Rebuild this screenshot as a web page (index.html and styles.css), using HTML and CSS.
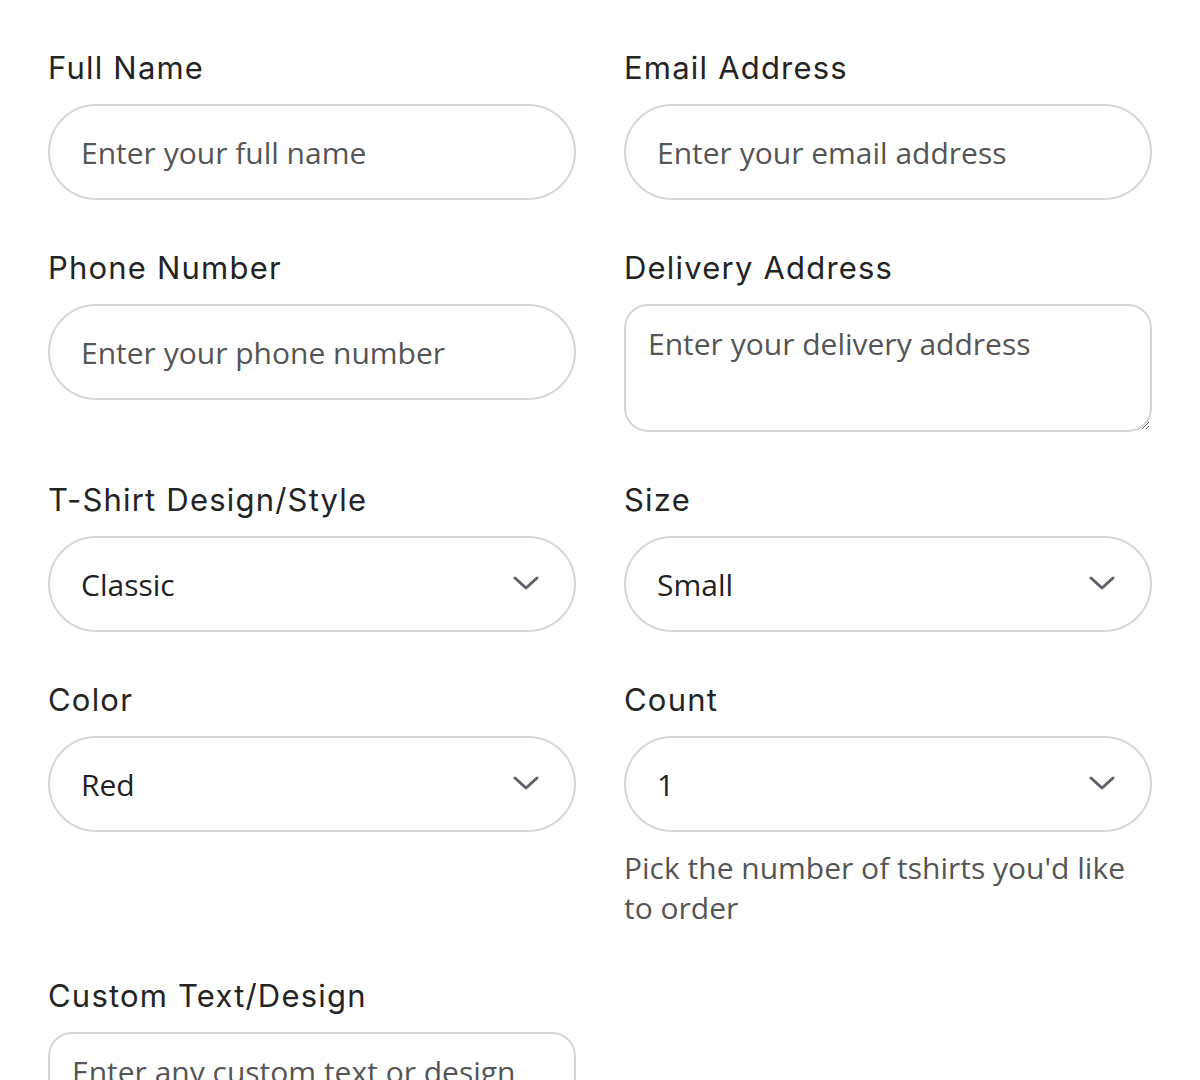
FILE: index.html
```html
<!DOCTYPE html>
<html lang="en">
<head>
    <meta charset="UTF-8">
    <meta name="viewport" content="width=device-width, initial-scale=1.0">
    <title>T-Shirt Order</title>
    <link rel="stylesheet" href="styles.css">
</head>
<body>

    <form class="order-form" action="#" method="post">

        <div class="field">
            <label for="fullName">Full Name</label>
            <input type="text" id="fullName" name="fullName" placeholder="Enter your full name">
        </div>

        <div class="field">
            <label for="email">Email Address</label>
            <input type="email" id="email" name="email" placeholder="Enter your email address">
        </div>

        <div class="field">
            <label for="phone">Phone Number</label>
            <input type="tel" id="phone" name="phone" placeholder="Enter your phone number">
        </div>

        <div class="field">
            <label for="address">Delivery Address</label>
            <textarea id="address" name="address" class="address" placeholder="Enter your delivery address"></textarea>
        </div>

        <div class="field">
            <label for="design">T-Shirt Design/Style</label>
            <div class="select-wrap">
                <select id="design" name="design">
                    <option>Classic</option>
                    <option>V-Neck</option>
                    <option>Polo</option>
                </select>
                <svg class="chevron" width="26" height="16" viewBox="0 0 26 16"><path d="M2 3 L13 13 L24 3" fill="none" stroke="#5f5f6d" stroke-width="3" stroke-linecap="round" stroke-linejoin="round"/></svg>
            </div>
        </div>

        <div class="field">
            <label for="size">Size</label>
            <div class="select-wrap">
                <select id="size" name="size">
                    <option>Small</option>
                    <option>Medium</option>
                    <option>Large</option>
                </select>
                <svg class="chevron" width="26" height="16" viewBox="0 0 26 16"><path d="M2 3 L13 13 L24 3" fill="none" stroke="#5f5f6d" stroke-width="3" stroke-linecap="round" stroke-linejoin="round"/></svg>
            </div>
        </div>

        <div class="field">
            <label for="color">Color</label>
            <div class="select-wrap">
                <select id="color" name="color">
                    <option>Red</option>
                    <option>Blue</option>
                    <option>Black</option>
                </select>
                <svg class="chevron" width="26" height="16" viewBox="0 0 26 16"><path d="M2 3 L13 13 L24 3" fill="none" stroke="#5f5f6d" stroke-width="3" stroke-linecap="round" stroke-linejoin="round"/></svg>
            </div>
        </div>

        <div class="field">
            <label for="count">Count</label>
            <div class="select-wrap">
                <select id="count" name="count">
                    <option>1</option>
                    <option>2</option>
                    <option>3</option>
                </select>
                <svg class="chevron" width="26" height="16" viewBox="0 0 26 16"><path d="M2 3 L13 13 L24 3" fill="none" stroke="#5f5f6d" stroke-width="3" stroke-linecap="round" stroke-linejoin="round"/></svg>
            </div>
            <p class="hint">Pick the number of tshirts you'd like to order</p>
        </div>

        <div class="field">
            <label for="custom">Custom Text/Design</label>
            <textarea id="custom" name="custom" class="custom" placeholder="Enter any custom text or design"></textarea>
        </div>

    </form>

</body>
</html>
```

FILE: styles.css
```css
body {
    margin: 0;
    padding: 45px 48px;
    background: #ffffff;
    font-family: "Open Sans", Arial, sans-serif;
}

.order-form {
    display: grid;
    grid-template-columns: 1fr 1fr;
    column-gap: 48px;
    row-gap: 45px;
    align-items: start;
}

.field {
    display: flex;
    flex-direction: column;
}

label {
    font-family: "Inter", "Liberation Sans", sans-serif;
    font-size: 31px;
    line-height: 45px;
    letter-spacing: 1.2px;
    color: #242424;
    margin-bottom: 14px;
}

input[type="text"],
input[type="email"],
input[type="tel"],
select {
    width: 100%;
    height: 96px;
    padding: 0 31px;
    border: 2px solid #d6d6d6;
    border-radius: 48px;
    background: #ffffff;
    font-family: "Open Sans", Arial, sans-serif;
    font-size: 30px;
    color: #222222;
    box-sizing: border-box;
    outline: none;
}

::placeholder {
    color: #555555;
    opacity: 1;
}

textarea {
    width: 100%;
    padding: 18px 22px;
    border: 2px solid #d6d6d6;
    border-radius: 24px;
    font-family: "Open Sans", Arial, sans-serif;
    font-size: 30px;
    line-height: 40px;
    color: #222222;
    box-sizing: border-box;
    outline: none;
}

.address {
    height: 128px;
}

.custom {
    height: 120px;
}

.select-wrap {
    position: relative;
}

select {
    appearance: none;
    -webkit-appearance: none;
}

.chevron {
    position: absolute;
    right: 37px;
    top: 39px;
    pointer-events: none;
}

.hint {
    margin: 16px 0 0;
    font-size: 30px;
    line-height: 40px;
    color: #555555;
}
```
